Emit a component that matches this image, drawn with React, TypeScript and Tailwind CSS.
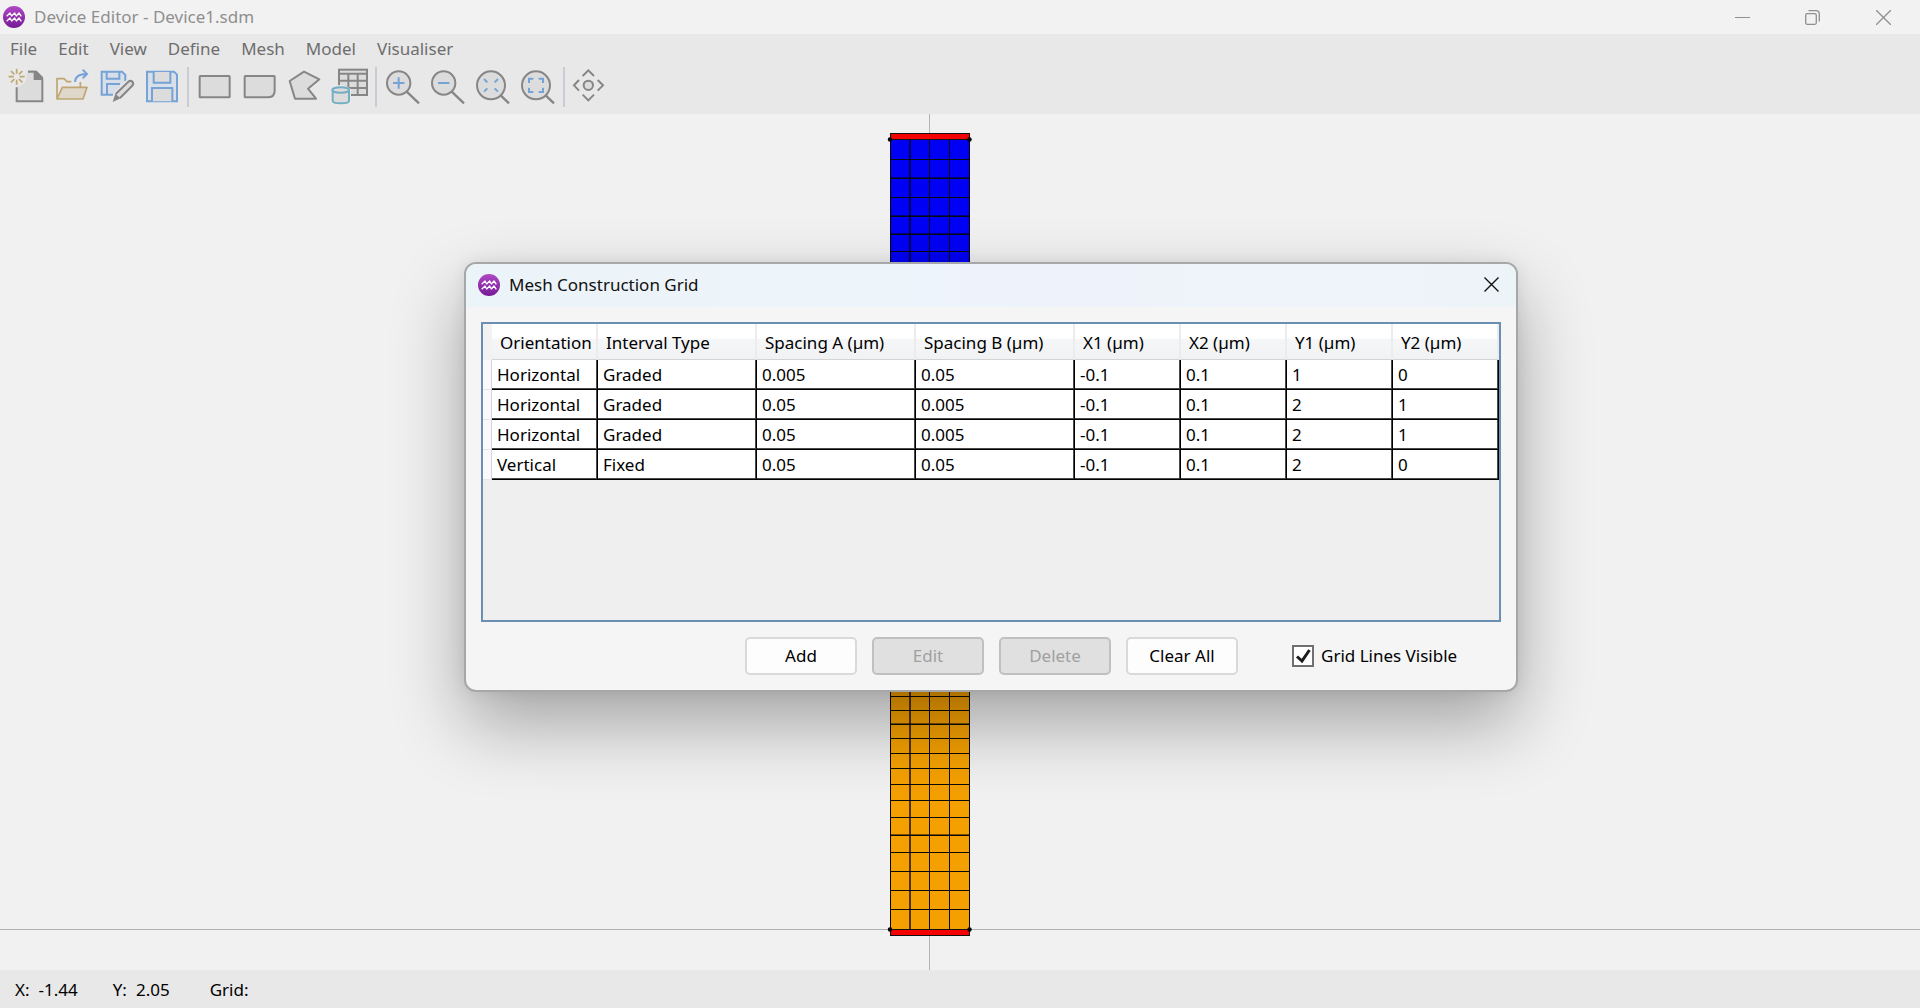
import type { ReactNode } from 'react';

const FONT = "font-['Segoe_UI','Noto_Sans',sans-serif]";

const GREY = '#868686';
const BLUE = '#75a3d6';
const TAN = '#bfa671';
const TEAL = '#74aec4';
const PALE = '#dcdcdc';

function Logo() {
  return (
    <svg viewBox="0 0 66 66" className="size-[22px] shrink-0" aria-hidden="true">
      <defs>
        <linearGradient id="logoFill" x1="0" y1="0" x2="0" y2="1">
          <stop offset="0" stopColor="#b048c4" />
          <stop offset="1" stopColor="#761a96" />
        </linearGradient>
      </defs>
      <circle cx="33" cy="33" r="33" fill="url(#logoFill)" />
      <path
        d="M11 31 L21 21 L26 30 L35 21 L40 30 L48 21 L55 31 M11 46 L21 36 L26 45 L35 36 L40 45 L48 36 L55 46"
        fill="none"
        stroke="#fff"
        strokeWidth="4"
        strokeLinejoin="round"
      />
    </svg>
  );
}

type Tool = { label: string; x: number; art: ReactNode };

// All tool drawings share one sheet; x is the left edge of each tool's cell on it.
const fileTools: Tool[] = [
  {
    label: 'New',
    x: 12,
    art: (
      <>
        <path d="M50 262 V304 H127 V237 L104 215 H84" fill={PALE} stroke={GREY} strokeWidth="6" />
        <path d="M80 212 H110 L129 231 V240 H101 V215 Z" fill={GREY} />
        <circle cx="50" cy="230" r="30" fill="#e8e8e8" />
        <path
          d="M50 206 V221 M50 239 V254 M26 230 H41 M59 230 H74 M33 213 L43 223 M57 237 L67 247 M67 213 L57 223 M43 237 L33 247"
          stroke={TAN}
          strokeWidth="5"
        />
      </>
    ),
  },
  {
    label: 'Open',
    x: 147,
    art: (
      <>
        <path d="M171 296 V236 H192 L201 245 H214 M241 246 V262" fill="none" stroke={TAN} strokeWidth="5" strokeLinejoin="round" />
        <path d="M171 297 L187 262 H261 L249 297 Z" fill="#dfd8ca" stroke={TAN} strokeWidth="5" strokeLinejoin="round" />
        <path d="M225 246 C226 229 238 222 260 222 M248 209 L261 222 L248 235" fill="none" stroke={BLUE} strokeWidth="6" />
      </>
    ),
  },
  {
    label: 'Save As',
    x: 282,
    art: (
      <>
        <path d="M341 284 H305 V215 H366 L376 225 V243" fill="#d9dfe8" stroke={BLUE} strokeWidth="6" />
        <path d="M320 216 V236 H358 V216 M321 284 V252 H360" fill="none" stroke={BLUE} strokeWidth="6" />
        <path d="M341 304 L347 283 L385 245 Q393 240 399 246 Q402 252 396 259 L360 295 Z" fill="#e8e8e8" stroke="#e8e8e8" strokeWidth="14" />
        <path d="M347 282 L385 245 Q392 240 398 246 Q402 252 396 258 L360 294" fill={PALE} stroke={GREY} strokeWidth="6" />
        <path d="M338 306 L346 281 L362 295 Z" fill={GREY} />
      </>
    ),
  },
  {
    label: 'Save',
    x: 417,
    art: (
      <>
        <path d="M441 215 H522 L531 224 V304 H441 Z" fill="#d9dfe8" stroke={BLUE} strokeWidth="6" />
        <path d="M461 216 V248 H511 V216 M456 304 V264 H517 V304" fill={PALE} stroke={BLUE} strokeWidth="6" />
      </>
    ),
  },
];

const shapeTools: Tool[] = [
  {
    label: 'Rectangle',
    x: 576,
    art: <rect x="599" y="228" width="90" height="64" rx="2" fill={PALE} stroke={GREY} strokeWidth="6" />,
  },
  {
    label: 'Rounded Rectangle',
    x: 711,
    art: (
      <path
        d="M736 228 H822 Q824 228 824 230 V272 Q824 292 802 292 H736 Q734 292 734 290 V230 Q734 228 736 228 Z"
        fill={PALE}
        stroke={GREY}
        strokeWidth="6"
      />
    ),
  },
  {
    label: 'Polygon',
    x: 846,
    art: (
      <path
        d="M912 215 L869 243 L885 296 H948 L924 266 L958 238 Z"
        fill={PALE}
        stroke={GREY}
        strokeWidth="6"
        strokeLinejoin="round"
      />
    ),
  },
  {
    label: 'Material Table',
    x: 981,
    art: (
      <>
        <rect x="1017" y="209" width="84" height="76" fill={PALE} stroke={GREY} strokeWidth="6" />
        <path d="M1017 221 H1101 M1017 242 H1101 M1017 264 H1101 M1045 221 V285 M1073 221 V285" stroke={GREY} strokeWidth="6" />
        <path d="M990 268 Q1022 242 1053 268 V316 H990 Z" fill="#e8e8e8" />
        <path
          d="M998 270 V302 C998 312 1047 312 1047 302 V270"
          fill={PALE}
          stroke={TEAL}
          strokeWidth="6"
        />
        <ellipse cx="1022" cy="270" rx="25" ry="8" fill={PALE} stroke={TEAL} strokeWidth="6" />
      </>
    ),
  },
];

const zoomTools: Tool[] = [
  {
    label: 'Zoom In',
    x: 1140,
    art: (
      <>
        <path d="M1220 275 L1257 310" stroke={GREY} strokeWidth="7" />
        <circle cx="1196" cy="249" r="35" fill={PALE} stroke={GREY} strokeWidth="6" />
        <path d="M1179 249 H1213 M1196 232 V266" stroke={BLUE} strokeWidth="6" />
      </>
    ),
  },
  {
    label: 'Zoom Out',
    x: 1275,
    art: (
      <>
        <path d="M1355 275 L1392 310" stroke={GREY} strokeWidth="7" />
        <circle cx="1331" cy="249" r="35" fill={PALE} stroke={GREY} strokeWidth="6" />
        <path d="M1314 249 H1348" stroke={BLUE} strokeWidth="6" />
      </>
    ),
  },
  {
    label: 'Zoom To Fit',
    x: 1410,
    art: (
      <>
        <path d="M1502 286 L1527 310" stroke={GREY} strokeWidth="7" />
        <circle cx="1473" cy="256" r="42" fill={PALE} stroke={GREY} strokeWidth="6" />
        <path
          d="M1452 237 L1462 247 M1494 237 L1484 247 M1452 275 L1462 265 M1494 275 L1484 265"
          stroke={BLUE}
          strokeWidth="6"
        />
      </>
    ),
  },
  {
    label: 'Zoom To Window',
    x: 1545,
    art: (
      <>
        <path d="M1637 286 L1662 310" stroke={GREY} strokeWidth="7" />
        <circle cx="1608" cy="256" r="42" fill={PALE} stroke={GREY} strokeWidth="6" />
        <path
          d="M1587 249 V236 H1600 M1616 236 H1629 V249 M1629 263 V276 H1616 M1600 276 H1587 V263"
          fill="none"
          stroke={BLUE}
          strokeWidth="6"
        />
      </>
    ),
  },
];

const panTools: Tool[] = [
  {
    label: 'Pan',
    x: 1704,
    art: (
      <>
        <circle cx="1765" cy="256" r="14" fill={PALE} stroke={GREY} strokeWidth="6" />
        <path
          d="M1748 228 L1765 211 L1782 228 M1748 284 L1765 301 L1782 284 M1737 240 L1722 256 L1737 272 M1793 240 L1809 256 L1793 272"
          fill="none"
          stroke={GREY}
          strokeWidth="6"
        />
      </>
    ),
  },
];

const toolGroups = [fileTools, shapeTools, zoomTools, panTools];

const menus = ['File', 'Edit', 'View', 'Define', 'Mesh', 'Model', 'Visualiser'];

const columns = [
  'Orientation',
  'Interval Type',
  'Spacing A (µm)',
  'Spacing B (µm)',
  'X1 (µm)',
  'X2 (µm)',
  'Y1 (µm)',
  'Y2 (µm)',
];

const rows = [
  ['Horizontal', 'Graded', '0.005', '0.05', '-0.1', '0.1', '1', '0'],
  ['Horizontal', 'Graded', '0.05', '0.005', '-0.1', '0.1', '2', '1'],
  ['Horizontal', 'Graded', '0.05', '0.005', '-0.1', '0.1', '2', '1'],
  ['Vertical', 'Fixed', '0.05', '0.05', '-0.1', '0.1', '2', '0'],
];

function TitleBar() {
  return (
    <header className="flex h-[34px] shrink-0 items-center bg-[#f2f2f2] pr-px pl-[3px]">
      <Logo />
      <h1 className="ml-[9px] flex-1 text-[17px] leading-6 text-[#8f8f8f]">Device Editor - Device1.sdm</h1>
      <div className="flex h-full text-[#8f8f8f]">
        <button type="button" aria-label="Minimise" className="grid w-[70px] place-items-center">
          <svg width="15" height="15" fill="none" stroke="currentColor">
            <path d="M0 7.5 H15" />
          </svg>
        </button>
        <button type="button" aria-label="Restore" className="grid w-[70px] place-items-center">
          <svg width="15" height="15" fill="none" stroke="currentColor" strokeWidth="1.3">
            <rect x="0.7" y="3.7" width="10.6" height="10.6" rx="1.5" />
            <path d="M3.5 0.7 H11 Q14.3 0.7 14.3 4 V11.5" />
          </svg>
        </button>
        <button type="button" aria-label="Close" className="grid w-[72px] place-items-center">
          <svg width="15" height="15" fill="none" stroke="currentColor" strokeWidth="1.3">
            <path d="M0 0 L15 15 M15 0 L0 15" />
          </svg>
        </button>
      </div>
    </header>
  );
}

function Toolbar() {
  return (
    <div className="flex h-[54px] items-start px-1 pt-[7px]">
      {toolGroups.map((group, i) => (
        <div key={group[0].label} className="flex items-center">
          {i > 0 && <div className="mx-[3px] h-10 w-[2px] bg-[#c9cdd3]" />}
          {group.map((tool) => (
            <button key={tool.label} type="button" aria-label={tool.label} className="h-10 w-[45px]">
              <svg viewBox={`${tool.x} 201 135 120`} className="h-10 w-[45px]">
                {tool.art}
              </svg>
            </button>
          ))}
        </div>
      ))}
    </div>
  );
}

// Positions of the mesh lines, in pixels from the top left of the canvas.
const LEFT = 890;
const RIGHT = 970;
const MID = 400;
const blueLines = [45, 64, 83, 102, 120, 137];
const orangeLines = [582, 596, 610, 624, 639, 654, 670, 686, 703, 721, 738, 757, 776, 795];
const heavyLines = [64, 102, 120, 610, 721];

function DeviceCanvas() {
  return (
    <svg className="block h-full w-full" role="img" aria-label="Device mesh">
      <g shapeRendering="crispEdges">
        <rect x="929" y="0" width="1" height="100%" fill="#b4b4b4" />
        <rect x="0" y="815" width="100%" height="1" fill="#b0b0b0" />
        <rect x={LEFT} y="25" width="80" height={MID - 25} fill="#0000f5" />
        <rect x={LEFT} y={MID} width="80" height={815 - MID} fill="#f4a000" />
        {[...blueLines, ...orangeLines].map((y) => (
          <rect key={y} x={LEFT} y={y} width="80" height="1" fill="#0a0a0a" />
        ))}
        {heavyLines.map((y) => (
          <rect key={y} x={LEFT} y={y - 1} width="80" height="1" fill="#000" opacity="0.5" />
        ))}
        <rect x="909" y="25" width="2" height="790" fill="#000" opacity="0.68" />
        <rect x="929" y="25" width="1" height="790" fill="#0a0a0a" />
        <rect x="949" y="25" width="1" height="790" fill="#0a0a0a" />
        <rect x={LEFT} y="25" width="1" height="790" fill="#000" />
        <rect x={RIGHT - 1} y="25" width="1" height="790" fill="#000" />
        <rect x="890" y="19" width="80" height="7" fill="#111" />
        <rect x="891" y="20" width="78" height="5" fill="#f50000" />
        <rect x="890" y="815" width="80" height="7" fill="#111" />
        <rect x="891" y="816" width="78" height="5" fill="#f50000" />
      </g>
      {[25.5, 815.5].map((cy) =>
        [890, 969.5].map((cx) => <circle key={`${cx}-${cy}`} cx={cx} cy={cy} r="2.2" fill="#000" />),
      )}
    </svg>
  );
}

function MeshTable() {
  return (
    <table className="w-full table-fixed border-separate border-spacing-0 text-left text-black">
      <colgroup>
        <col className="w-[9px]" />
        <col className="w-[106px]" />
        <col className="w-[159px]" />
        <col className="w-[159px]" />
        <col className="w-[159px]" />
        <col className="w-[106px]" />
        <col className="w-[106px]" />
        <col className="w-[106px]" />
        <col className="w-[106px]" />
      </colgroup>
      <thead>
        <tr className="h-9">
          <td className="bg-[#f2f2f2] p-0" />
          {columns.map((c) => (
            <th
              key={c}
              scope="col"
              className="border-r-2 border-b border-r-[#ececec] border-b-[#d2d3d5] bg-linear-to-b from-white from-40% via-[#f5f6f8] via-45% to-[#f1f2f4] p-0 pt-0.5 pl-2 font-normal whitespace-nowrap"
            >
              {c}
            </th>
          ))}
        </tr>
      </thead>
      <tbody>
        {rows.map((r, i) => (
          <tr key={i} className="h-[30px]">
            <td className="border-r border-b border-r-[#d5d6d8] border-b-[#e6e6e8] bg-[#fafafa] p-0" />
            {r.map((v, j) => (
              <td
                key={j}
                className="border-r border-b border-black bg-white p-0 pl-[5px] shadow-[inset_-1px_-1px_0_#4a4a4a]"
              >
                {v}
              </td>
            ))}
          </tr>
        ))}
      </tbody>
    </table>
  );
}

function DialogButton({ label, disabled = false }: { label: string; disabled?: boolean }) {
  return (
    <button
      type="button"
      disabled={disabled}
      className="h-[38px] w-28 rounded-[5px] border-2 border-[#d9d9d9] bg-[#fdfdfd] text-black disabled:border-[#c0c0c0] disabled:bg-[#e0e0e0] disabled:text-[#a0a0a0]"
    >
      {label}
    </button>
  );
}

function MeshDialog() {
  return (
    <section
      role="dialog"
      aria-labelledby="mesh-title"
      className="absolute top-[148px] left-[464px] w-[1054px] overflow-hidden rounded-xl border-2 border-[#a6a7a8] bg-[#f5f5f5] text-[17px] leading-6 shadow-[0_32px_72px_rgba(0,0,0,0.32),0_0_16px_rgba(0,0,0,0.08)]"
    >
      <header className="flex h-[43px] items-center bg-linear-to-r from-[#ebf4f8] via-[#eef3fb] via-60% to-[#edf4f8] pr-[17px] pb-0.5 pl-3">
        <Logo />
        <h2 id="mesh-title" className="ml-[9px] flex-1 text-[#111]">
          Mesh Construction Grid
        </h2>
        <button type="button" aria-label="Close dialog">
          <svg width="15" height="15" fill="none" stroke="#111" strokeWidth="1.4">
            <path d="M0.5 0.5 L14.5 14.5 M14.5 0.5 L0.5 14.5" />
          </svg>
        </button>
      </header>
      <div className="px-[15px] pt-[15px] pb-[15px]">
        <div className="h-[300px] border-2 border-[#6b8fb3] bg-[#efefef]">
          <MeshTable />
        </div>
        <div className="mt-[15px] flex items-center gap-[15px] pl-[264px]">
          <DialogButton label="Add" />
          <DialogButton label="Edit" disabled />
          <DialogButton label="Delete" disabled />
          <DialogButton label="Clear All" />
          <label className="ml-[39px] flex items-center gap-[7px] text-black">
            <span className="grid size-[22px] place-items-center">
              <input
                type="checkbox"
                defaultChecked
                className="peer col-start-1 row-start-1 size-[22px] appearance-none border-2 border-[#707070] bg-white"
              />
              <svg
                viewBox="0 0 22 22"
                className="pointer-events-none invisible col-start-1 row-start-1 size-[22px] peer-checked:visible"
              >
                <path d="M5 11.5 L10 16 L17.5 5" fill="none" stroke="#1d1d1d" strokeWidth="3" />
              </svg>
            </span>
            Grid Lines Visible
          </label>
        </div>
      </div>
    </section>
  );
}

export default function App() {
  return (
    <div className={`${FONT} flex h-screen flex-col overflow-hidden bg-[#f1f1f1]`}>
      <TitleBar />
      <div className="shrink-0 bg-[#e8e8e8]">
        <nav className="flex h-[26px] items-center gap-[21px] px-[10px] pt-1 text-[17px] leading-6 text-[#6e6e6e]">
          {menus.map((m) => (
            <button key={m} type="button">
              {m}
            </button>
          ))}
        </nav>
        <Toolbar />
      </div>
      <main className="relative min-h-0 flex-1">
        <DeviceCanvas />
        <MeshDialog />
      </main>
      <footer className="flex h-[38px] shrink-0 items-center bg-[#e8e8e8] px-[15px] pt-0.5 text-[17px] leading-6 text-black">
        <span className="mr-[9px]">X:</span>
        <span className="mr-[35px]">-1.44</span>
        <span className="mr-[9px]">Y:</span>
        <span className="mr-10">2.05</span>
        <span>Grid:</span>
      </footer>
    </div>
  );
}
